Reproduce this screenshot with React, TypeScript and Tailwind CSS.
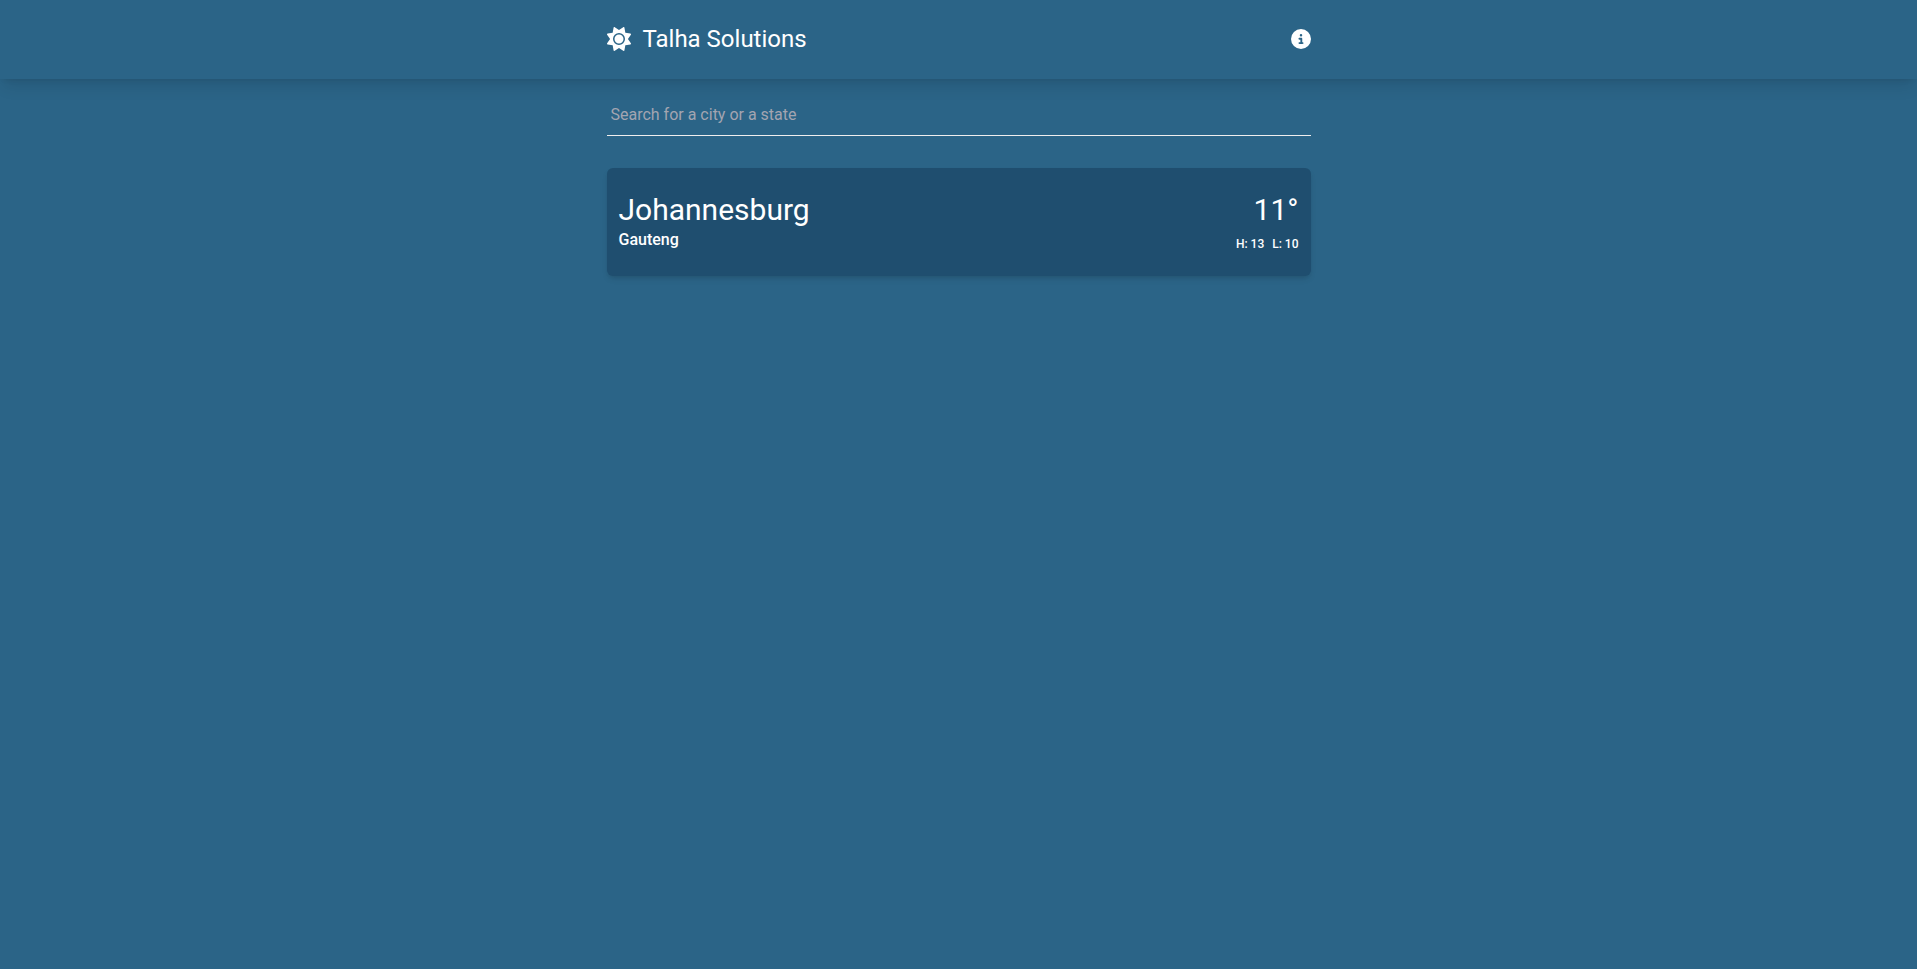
import { FaSun, FaCircleInfo } from "react-icons/fa6";

export default function App() {
  return (
    <div className="flex min-h-screen flex-col bg-[#2b6487] font-[Roboto,sans-serif]">
      <header className="bg-[#2b6487] shadow-lg">
        <nav className="mx-auto flex max-w-[704px] items-center justify-between pt-[23px] pb-6 text-white">
          <a href="#" className="flex items-center gap-3">
            <FaSun className="text-2xl" />
            <p className="text-2xl">Talha Solutions</p>
          </a>
          <button type="button" aria-label="About">
            <FaCircleInfo className="text-xl" />
          </button>
        </nav>
      </header>
      <main className="mx-auto w-full max-w-[704px] text-white">
        <div className="mb-8 pt-4">
          <input
            type="text"
            aria-label="Search for a city or a state"
            placeholder="Search for a city or a state"
            className="w-full border-b border-[#f0eeee] bg-transparent px-1 py-2 placeholder:text-[#a3a5b1] focus:outline-none"
          />
        </div>
        <button
          type="button"
          className="flex w-full items-center justify-between rounded-md bg-[#1f4e6f] px-3 py-6 text-left shadow-md"
        >
          <span className="flex flex-col">
            <span className="text-3xl">Johannesburg</span>
            <span className="font-medium">Gauteng</span>
          </span>
          <span className="flex flex-col gap-2">
            <span className="self-end text-3xl">11°</span>
            <span className="flex gap-2 text-xs font-medium">
              <span>H: 13</span>
              <span>L: 10</span>
            </span>
          </span>
        </button>
      </main>
    </div>
  );
}
